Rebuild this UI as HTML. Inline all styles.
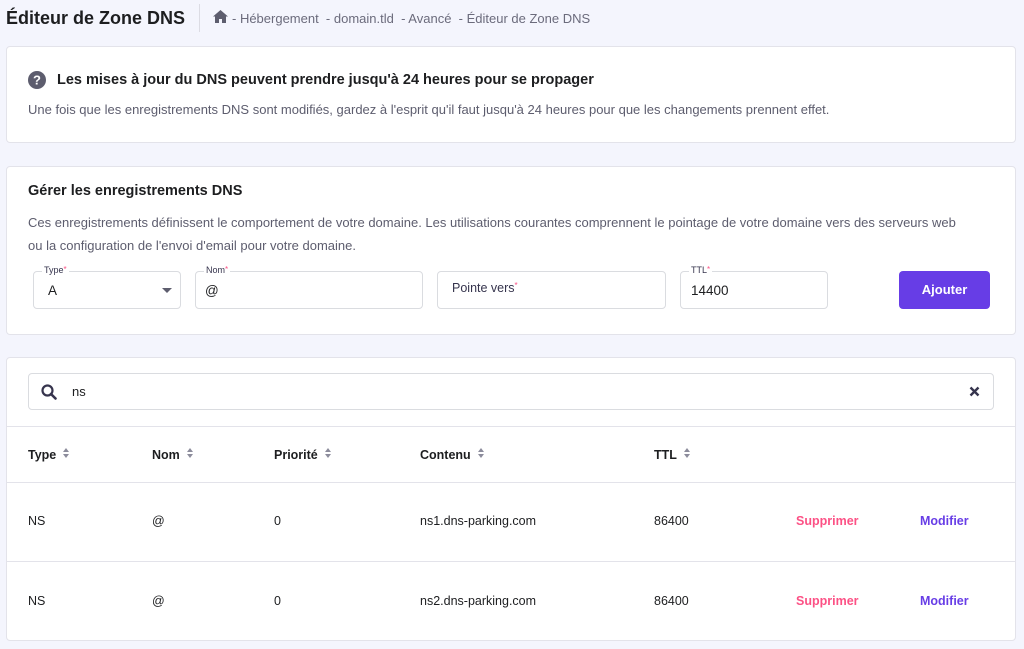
<!DOCTYPE html>
<html><head><meta charset="utf-8"><style>
*{box-sizing:border-box;margin:0;padding:0}
body{width:1024px;height:649px;background:#f4f5fd;font-family:"Liberation Sans",sans-serif;color:#1d1e20;position:relative;overflow:hidden}
.a{position:absolute}
.card{position:absolute;left:6px;width:1010px;background:#fff;border:1px solid #e3e3ea;border-radius:4px}
.in{position:absolute;border:1px solid #dadce0;border-radius:4px;height:38px;top:271px;background:#fff;font-size:13.5px;padding:11px 0 0 14px}
.lab{position:absolute;top:-7px;left:8px;background:#fff;font-size:9px;color:#36344d;padding:0 2px}
.lab i,.pv i{color:#fc5185;font-style:normal;font-size:8px;vertical-align:top}
.s{display:inline-block;margin-left:7px;vertical-align:0px;width:6px;height:10px;position:relative}
.s:before,.s:after{content:"";position:absolute;left:0;border:3px solid transparent}
.s:before{top:-1px;border-bottom:4px solid #8c8c9c;border-top:0}
.s:after{top:5px;border-top:4px solid #8c8c9c;border-bottom:0}
.td{position:absolute;font-size:12.5px}
</style></head><body>
<div class="a" style="left:6px;top:8px;font-size:18px;font-weight:bold">Éditeur de Zone DNS</div>
<div class="a" style="left:199px;top:4px;width:1px;height:28px;background:#dcdce4"></div>
<svg class="a" style="left:213px;top:10px" width="15" height="13" viewBox="0 0 15 13"><path d="M7.5 0L0 6.5h2V13h4V9h3v4h4V6.5h2z" fill="#5d5d6e"/></svg>
<div class="a" style="left:232px;top:11px;font-size:13px;color:#6b6b7c">- Hébergement &nbsp;- domain.tld &nbsp;- Avancé &nbsp;- Éditeur de Zone DNS</div>

<div class="card" style="top:46px;height:97px"></div>
<svg class="a" style="left:28px;top:71px" width="18" height="18" viewBox="0 0 18 18"><circle cx="9" cy="9" r="9" fill="#5d5d6e"/><text x="9" y="13.5" text-anchor="middle" font-size="13" font-weight="bold" fill="#fff" font-family="Liberation Sans">?</text></svg>
<div class="a" style="left:57px;top:72px;font-size:14.5px;font-weight:bold">Les mises à jour du DNS peuvent prendre jusqu'à 24 heures pour se propager</div>
<div class="a" style="left:28px;top:102px;font-size:13px;color:#5d5d6e">Une fois que les enregistrements DNS sont modifiés, gardez à l'esprit qu'il faut jusqu'à 24 heures pour que les changements prennent effet.</div>

<div class="card" style="top:166px;height:169px"></div>
<div class="a" style="left:28px;top:183px;font-size:14.5px;font-weight:bold">Gérer les enregistrements DNS</div>
<div class="a" style="left:28px;top:211px;font-size:13px;color:#5d5d6e;line-height:23px;width:985px;white-space:nowrap">Ces enregistrements définissent le comportement de votre domaine. Les utilisations courantes comprennent le pointage de votre domaine vers des serveurs web<br>ou la configuration de l'envoi d'email pour votre domaine.</div>
<div class="in" style="left:33px;width:148px">A<div class="lab">Type<i>*</i></div><div class="a" style="right:8px;top:16px;border:5px solid transparent;border-top:5px solid #5d5d6e;border-bottom:0"></div></div>
<div class="in" style="left:195px;width:228px;padding-left:9px">@<div class="lab">Nom<i>*</i></div></div>
<div class="in pv" style="left:437px;width:229px;font-size:12.5px;color:#36344d;padding-top:9px">Pointe vers<i>*</i></div>
<div class="in" style="left:680px;width:148px;padding-left:10px">14400<div class="lab">TTL<i>*</i></div></div>
<div class="a" style="left:899px;top:271px;width:91px;height:38px;background:#673de6;border-radius:4px;color:#fff;font-size:13px;font-weight:bold;text-align:center;line-height:38px">Ajouter</div>

<div class="card" style="top:357px;height:284px"></div>
<div class="a" style="left:28px;top:373px;width:966px;height:37px;border:1px solid #dadce0;border-radius:4px"></div>
<svg class="a" style="left:41px;top:384px" width="16" height="16" viewBox="0 0 16 16"><circle cx="6.5" cy="6.5" r="5" fill="none" stroke="#36344d" stroke-width="2.2"/><path d="M10 10l4.5 4.5" stroke="#36344d" stroke-width="2.6" stroke-linecap="round"/></svg>
<div class="a" style="left:72px;top:384px;font-size:13px">ns</div>
<svg class="a" style="left:969px;top:386px" width="11" height="11" viewBox="0 0 11 11"><path d="M1.5 1.5l8 8M9.5 1.5l-8 8" stroke="#36344d" stroke-width="2.4"/></svg>
<div class="a" style="left:7px;top:426px;width:1008px;height:1px;background:#e3e3ea"></div>
<div class="a" style="left:7px;top:482px;width:1008px;height:1px;background:#e3e3ea"></div>
<div class="a" style="left:7px;top:561px;width:1008px;height:1px;background:#e3e3ea"></div>
<div class="a" style="left:28px;top:448px;font-size:12.5px;font-weight:bold">Type<span class="s"></span></div>
<div class="a" style="left:152px;top:448px;font-size:12.5px;font-weight:bold">Nom<span class="s"></span></div>
<div class="a" style="left:274px;top:448px;font-size:12.5px;font-weight:bold">Priorité<span class="s"></span></div>
<div class="a" style="left:420px;top:448px;font-size:12.5px;font-weight:bold">Contenu<span class="s"></span></div>
<div class="a" style="left:654px;top:448px;font-size:12.5px;font-weight:bold">TTL<span class="s"></span></div>

<div class="td" style="left:28px;top:514px">NS</div><div class="td" style="left:152px;top:514px">@</div><div class="td" style="left:274px;top:514px">0</div><div class="td" style="left:420px;top:514px">ns1.dns-parking.com</div><div class="td" style="left:654px;top:514px">86400</div>
<div class="td" style="left:796px;top:514px;color:#fc5185;font-weight:bold">Supprimer</div><div class="td" style="left:920px;top:514px;color:#673de6;font-weight:bold">Modifier</div>
<div class="td" style="left:28px;top:594px">NS</div><div class="td" style="left:152px;top:594px">@</div><div class="td" style="left:274px;top:594px">0</div><div class="td" style="left:420px;top:594px">ns2.dns-parking.com</div><div class="td" style="left:654px;top:594px">86400</div>
<div class="td" style="left:796px;top:594px;color:#fc5185;font-weight:bold">Supprimer</div><div class="td" style="left:920px;top:594px;color:#673de6;font-weight:bold">Modifier</div>
</body></html>
